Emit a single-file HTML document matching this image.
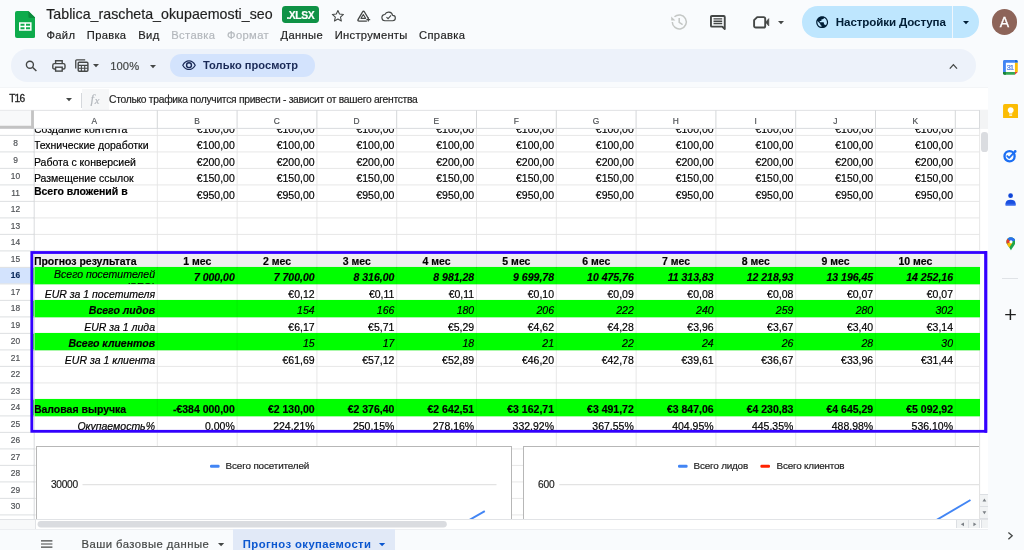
<!DOCTYPE html><html><head><meta charset="utf-8"><title>Tablica_rascheta_okupaemosti_seo</title>
<style>
html,body{margin:0;padding:0}
body{width:1024px;height:550px;overflow:hidden;position:relative;background:#f9fbfd;font-family:"Liberation Sans",sans-serif;}
div,svg{position:absolute;box-sizing:border-box}
#root{-webkit-text-stroke:0.18px}
.clip{overflow:hidden}
</style></head><body><div id="root" style="left:0;top:0;width:1024px;height:550px;will-change:transform">
<svg style="left:14.8px;top:11px" width="20.4" height="27" viewBox="0 0 20.4 27">
<path d="M2 0 H13.4 L20.4 7 V25 a2 2 0 0 1 -2 2 H2 a2 2 0 0 1 -2 -2 V2 a2 2 0 0 1 2 -2z" fill="#0eab4c"/>
<path d="M13.4 0 L20.4 7 H15 a1.6 1.6 0 0 1 -1.6 -1.6z" fill="#0b8a3c"/>
<path d="M4 11.3 H16.6 V19.7 H4z M5.5 12.8 V14.8 H9.5 V12.8z M11 12.8 V14.8 H15.1 V12.8z M5.5 16.2 V18.2 H9.5 V16.2z M11 16.2 V18.2 H15.1 V16.2z" fill="#fff" fill-rule="evenodd"/>
</svg>
<div style="top:6.48px;height:16px;line-height:16px;font-size:14.2px;color:#1f1f1f;white-space:pre;letter-spacing:0.029px;left:46.20px;">Tablica_rascheta_okupaemosti_seo</div>
<div style="left:282.00px;top:6.40px;width:37.20px;height:16.20px;background:#0f9246;border-radius:3.4px;"></div>
<div style="top:7.70px;height:16px;line-height:16px;font-size:10.4px;color:#fff;white-space:pre;font-weight:700;letter-spacing:-0.446px;left:286.40px;">.XLSX</div>
<div style="top:26.82px;height:16px;line-height:16px;font-size:11.2px;color:#1f1f1f;white-space:pre;letter-spacing:0.271px;left:46.60px;">Файл</div>
<div style="top:26.82px;height:16px;line-height:16px;font-size:11.2px;color:#1f1f1f;white-space:pre;letter-spacing:0.301px;left:86.80px;">Правка</div>
<div style="top:26.82px;height:16px;line-height:16px;font-size:11.2px;color:#1f1f1f;white-space:pre;letter-spacing:0.350px;left:138.30px;">Вид</div>
<div style="top:26.82px;height:16px;line-height:16px;font-size:11.2px;color:#b3b7bc;white-space:pre;letter-spacing:0.358px;left:171.30px;">Вставка</div>
<div style="top:26.82px;height:16px;line-height:16px;font-size:11.2px;color:#b3b7bc;white-space:pre;letter-spacing:0.375px;left:227.00px;">Формат</div>
<div style="top:26.82px;height:16px;line-height:16px;font-size:11.2px;color:#1f1f1f;white-space:pre;letter-spacing:0.330px;left:280.60px;">Данные</div>
<div style="top:26.82px;height:16px;line-height:16px;font-size:11.2px;color:#1f1f1f;white-space:pre;letter-spacing:0.276px;left:334.80px;">Инструменты</div>
<div style="top:26.82px;height:16px;line-height:16px;font-size:11.2px;color:#1f1f1f;white-space:pre;letter-spacing:0.358px;left:419.00px;">Справка</div>
<div style="left:10.50px;top:49.30px;width:965.50px;height:32.60px;background:#edf2fa;border-radius:16.3px;"></div>
<div style="top:58.22px;height:16px;line-height:16px;font-size:11.2px;color:#444746;white-space:pre;letter-spacing:0.094px;left:110.20px;">100%</div>
<div style="left:169.90px;top:54.30px;width:145.10px;height:22.70px;background:#d3e3fd;border-radius:11.35px;"></div>
<div style="top:57.35px;height:16px;line-height:16px;font-size:11.1px;color:#1a2a57;white-space:pre;font-weight:700;letter-spacing:0.016px;left:203.00px;-webkit-text-stroke:0;">Только просмотр</div>
<div style="left:0.00px;top:87.30px;width:988.00px;height:1.20px;background:#f3f5f7;"></div>
<div style="left:0.00px;top:88.20px;width:988.00px;height:22.20px;background:#fff;"></div>
<div style="top:91.37px;height:16px;line-height:16px;font-size:10.2px;color:#1f1f1f;white-space:pre;letter-spacing:-0.788px;left:9.20px;-webkit-text-stroke:0.3px;">T16</div>
<div style="left:81.30px;top:92.50px;width:1.00px;height:15.00px;background:#d5d8dc;"></div>
<div style="left:81.90px;top:89.40px;width:26.90px;height:20.60px;background:#f6f7f8;"></div>
<div style="top:91.53px;height:16px;line-height:16px;font-size:10.3px;color:#1f1f1f;white-space:pre;letter-spacing:-0.287px;left:109.00px;">Столько трафика получится привести - зависит от вашего агентства</div>
<div style="left:0.00px;top:110.40px;width:988.00px;height:418.60px;background:#fff;"></div>
<svg style="left:0;top:0" width="1024" height="550"><g stroke="#e3e3e3" stroke-width="0.85"><line x1="0" y1="135.40" x2="979.60" y2="135.40"/><line x1="0" y1="151.90" x2="979.60" y2="151.90"/><line x1="0" y1="168.40" x2="979.60" y2="168.40"/><line x1="0" y1="184.90" x2="979.60" y2="184.90"/><line x1="0" y1="201.40" x2="979.60" y2="201.40"/><line x1="0" y1="217.90" x2="979.60" y2="217.90"/><line x1="0" y1="234.40" x2="979.60" y2="234.40"/><line x1="0" y1="250.90" x2="979.60" y2="250.90"/><line x1="0" y1="267.40" x2="979.60" y2="267.40"/><line x1="0" y1="283.90" x2="979.60" y2="283.90"/><line x1="0" y1="300.40" x2="979.60" y2="300.40"/><line x1="0" y1="316.90" x2="979.60" y2="316.90"/><line x1="0" y1="333.40" x2="979.60" y2="333.40"/><line x1="0" y1="349.90" x2="979.60" y2="349.90"/><line x1="0" y1="366.40" x2="979.60" y2="366.40"/><line x1="0" y1="382.90" x2="979.60" y2="382.90"/><line x1="0" y1="399.40" x2="979.60" y2="399.40"/><line x1="0" y1="415.90" x2="979.60" y2="415.90"/><line x1="0" y1="432.40" x2="979.60" y2="432.40"/><line x1="0" y1="448.90" x2="979.60" y2="448.90"/><line x1="0" y1="465.40" x2="979.60" y2="465.40"/><line x1="0" y1="481.90" x2="979.60" y2="481.90"/><line x1="0" y1="498.40" x2="979.60" y2="498.40"/><line x1="0" y1="514.90" x2="979.60" y2="514.90"/><line x1="157.30" y1="110.40" x2="157.30" y2="519.50"/><line x1="237.10" y1="110.40" x2="237.10" y2="519.50"/><line x1="316.90" y1="110.40" x2="316.90" y2="519.50"/><line x1="396.70" y1="110.40" x2="396.70" y2="519.50"/><line x1="476.50" y1="110.40" x2="476.50" y2="519.50"/><line x1="556.30" y1="110.40" x2="556.30" y2="519.50"/><line x1="636.10" y1="110.40" x2="636.10" y2="519.50"/><line x1="715.90" y1="110.40" x2="715.90" y2="519.50"/><line x1="795.70" y1="110.40" x2="795.70" y2="519.50"/><line x1="875.50" y1="110.40" x2="875.50" y2="519.50"/><line x1="955.30" y1="110.40" x2="955.30" y2="519.50"/><line x1="979.60" y1="110.40" x2="979.60" y2="519.50"/></g></svg>
<svg style="left:0;top:0" width="1024" height="550"><rect x="33.0" y="250.45" width="947.00" height="17.35" fill="#efefef"/><rect x="33.0" y="266.95" width="947.00" height="17.35" fill="#00ff00"/><rect x="33.0" y="299.95" width="947.00" height="17.35" fill="#00ff00"/><rect x="33.0" y="332.95" width="947.00" height="17.35" fill="#00ff00"/><rect x="33.0" y="398.95" width="947.00" height="17.35" fill="#00ff00"/><line x1="157.30" y1="250.45" x2="157.30" y2="267.80" stroke="#000" stroke-opacity="0.09" stroke-width="0.85"/><line x1="237.10" y1="250.45" x2="237.10" y2="267.80" stroke="#000" stroke-opacity="0.09" stroke-width="0.85"/><line x1="316.90" y1="250.45" x2="316.90" y2="267.80" stroke="#000" stroke-opacity="0.09" stroke-width="0.85"/><line x1="396.70" y1="250.45" x2="396.70" y2="267.80" stroke="#000" stroke-opacity="0.09" stroke-width="0.85"/><line x1="476.50" y1="250.45" x2="476.50" y2="267.80" stroke="#000" stroke-opacity="0.09" stroke-width="0.85"/><line x1="556.30" y1="250.45" x2="556.30" y2="267.80" stroke="#000" stroke-opacity="0.09" stroke-width="0.85"/><line x1="636.10" y1="250.45" x2="636.10" y2="267.80" stroke="#000" stroke-opacity="0.09" stroke-width="0.85"/><line x1="715.90" y1="250.45" x2="715.90" y2="267.80" stroke="#000" stroke-opacity="0.09" stroke-width="0.85"/><line x1="795.70" y1="250.45" x2="795.70" y2="267.80" stroke="#000" stroke-opacity="0.09" stroke-width="0.85"/><line x1="875.50" y1="250.45" x2="875.50" y2="267.80" stroke="#000" stroke-opacity="0.09" stroke-width="0.85"/><line x1="955.30" y1="250.45" x2="955.30" y2="267.80" stroke="#000" stroke-opacity="0.09" stroke-width="0.85"/><line x1="157.30" y1="266.95" x2="157.30" y2="284.30" stroke="#000" stroke-opacity="0.07" stroke-width="0.85"/><line x1="237.10" y1="266.95" x2="237.10" y2="284.30" stroke="#000" stroke-opacity="0.07" stroke-width="0.85"/><line x1="316.90" y1="266.95" x2="316.90" y2="284.30" stroke="#000" stroke-opacity="0.07" stroke-width="0.85"/><line x1="396.70" y1="266.95" x2="396.70" y2="284.30" stroke="#000" stroke-opacity="0.07" stroke-width="0.85"/><line x1="476.50" y1="266.95" x2="476.50" y2="284.30" stroke="#000" stroke-opacity="0.07" stroke-width="0.85"/><line x1="556.30" y1="266.95" x2="556.30" y2="284.30" stroke="#000" stroke-opacity="0.07" stroke-width="0.85"/><line x1="636.10" y1="266.95" x2="636.10" y2="284.30" stroke="#000" stroke-opacity="0.07" stroke-width="0.85"/><line x1="715.90" y1="266.95" x2="715.90" y2="284.30" stroke="#000" stroke-opacity="0.07" stroke-width="0.85"/><line x1="795.70" y1="266.95" x2="795.70" y2="284.30" stroke="#000" stroke-opacity="0.07" stroke-width="0.85"/><line x1="875.50" y1="266.95" x2="875.50" y2="284.30" stroke="#000" stroke-opacity="0.07" stroke-width="0.85"/><line x1="955.30" y1="266.95" x2="955.30" y2="284.30" stroke="#000" stroke-opacity="0.07" stroke-width="0.85"/><line x1="157.30" y1="299.95" x2="157.30" y2="317.30" stroke="#000" stroke-opacity="0.07" stroke-width="0.85"/><line x1="237.10" y1="299.95" x2="237.10" y2="317.30" stroke="#000" stroke-opacity="0.07" stroke-width="0.85"/><line x1="316.90" y1="299.95" x2="316.90" y2="317.30" stroke="#000" stroke-opacity="0.07" stroke-width="0.85"/><line x1="396.70" y1="299.95" x2="396.70" y2="317.30" stroke="#000" stroke-opacity="0.07" stroke-width="0.85"/><line x1="476.50" y1="299.95" x2="476.50" y2="317.30" stroke="#000" stroke-opacity="0.07" stroke-width="0.85"/><line x1="556.30" y1="299.95" x2="556.30" y2="317.30" stroke="#000" stroke-opacity="0.07" stroke-width="0.85"/><line x1="636.10" y1="299.95" x2="636.10" y2="317.30" stroke="#000" stroke-opacity="0.07" stroke-width="0.85"/><line x1="715.90" y1="299.95" x2="715.90" y2="317.30" stroke="#000" stroke-opacity="0.07" stroke-width="0.85"/><line x1="795.70" y1="299.95" x2="795.70" y2="317.30" stroke="#000" stroke-opacity="0.07" stroke-width="0.85"/><line x1="875.50" y1="299.95" x2="875.50" y2="317.30" stroke="#000" stroke-opacity="0.07" stroke-width="0.85"/><line x1="955.30" y1="299.95" x2="955.30" y2="317.30" stroke="#000" stroke-opacity="0.07" stroke-width="0.85"/><line x1="157.30" y1="332.95" x2="157.30" y2="350.30" stroke="#000" stroke-opacity="0.07" stroke-width="0.85"/><line x1="237.10" y1="332.95" x2="237.10" y2="350.30" stroke="#000" stroke-opacity="0.07" stroke-width="0.85"/><line x1="316.90" y1="332.95" x2="316.90" y2="350.30" stroke="#000" stroke-opacity="0.07" stroke-width="0.85"/><line x1="396.70" y1="332.95" x2="396.70" y2="350.30" stroke="#000" stroke-opacity="0.07" stroke-width="0.85"/><line x1="476.50" y1="332.95" x2="476.50" y2="350.30" stroke="#000" stroke-opacity="0.07" stroke-width="0.85"/><line x1="556.30" y1="332.95" x2="556.30" y2="350.30" stroke="#000" stroke-opacity="0.07" stroke-width="0.85"/><line x1="636.10" y1="332.95" x2="636.10" y2="350.30" stroke="#000" stroke-opacity="0.07" stroke-width="0.85"/><line x1="715.90" y1="332.95" x2="715.90" y2="350.30" stroke="#000" stroke-opacity="0.07" stroke-width="0.85"/><line x1="795.70" y1="332.95" x2="795.70" y2="350.30" stroke="#000" stroke-opacity="0.07" stroke-width="0.85"/><line x1="875.50" y1="332.95" x2="875.50" y2="350.30" stroke="#000" stroke-opacity="0.07" stroke-width="0.85"/><line x1="955.30" y1="332.95" x2="955.30" y2="350.30" stroke="#000" stroke-opacity="0.07" stroke-width="0.85"/><line x1="157.30" y1="398.95" x2="157.30" y2="416.30" stroke="#000" stroke-opacity="0.07" stroke-width="0.85"/><line x1="237.10" y1="398.95" x2="237.10" y2="416.30" stroke="#000" stroke-opacity="0.07" stroke-width="0.85"/><line x1="316.90" y1="398.95" x2="316.90" y2="416.30" stroke="#000" stroke-opacity="0.07" stroke-width="0.85"/><line x1="396.70" y1="398.95" x2="396.70" y2="416.30" stroke="#000" stroke-opacity="0.07" stroke-width="0.85"/><line x1="476.50" y1="398.95" x2="476.50" y2="416.30" stroke="#000" stroke-opacity="0.07" stroke-width="0.85"/><line x1="556.30" y1="398.95" x2="556.30" y2="416.30" stroke="#000" stroke-opacity="0.07" stroke-width="0.85"/><line x1="636.10" y1="398.95" x2="636.10" y2="416.30" stroke="#000" stroke-opacity="0.07" stroke-width="0.85"/><line x1="715.90" y1="398.95" x2="715.90" y2="416.30" stroke="#000" stroke-opacity="0.07" stroke-width="0.85"/><line x1="795.70" y1="398.95" x2="795.70" y2="416.30" stroke="#000" stroke-opacity="0.07" stroke-width="0.85"/><line x1="875.50" y1="398.95" x2="875.50" y2="416.30" stroke="#000" stroke-opacity="0.07" stroke-width="0.85"/><line x1="955.30" y1="398.95" x2="955.30" y2="416.30" stroke="#000" stroke-opacity="0.07" stroke-width="0.85"/></svg>
<div class="clip" style="left:0;top:128.6px;width:979.6px;height:390.9px">
<div style="left:0;top:-128.6px;width:1024px;height:550px">
<div style="top:120.66px;height:16px;line-height:16px;font-size:10.5px;color:#000;white-space:pre;left:33.90px;">Создание контента</div>
<div style="top:137.16px;height:16px;line-height:16px;font-size:10.5px;color:#000;white-space:pre;left:33.90px;">Технические доработки</div>
<div style="top:153.66px;height:16px;line-height:16px;font-size:10.5px;color:#000;white-space:pre;left:33.90px;">Работа с конверсией</div>
<div style="top:170.16px;height:16px;line-height:16px;font-size:10.5px;color:#000;white-space:pre;left:33.90px;">Размещение ссылок</div>
<div style="top:183.26px;height:16px;line-height:16px;font-size:10.5px;color:#000;white-space:pre;font-weight:700;left:33.90px;">Всего вложений в</div>
<div style="top:252.56px;height:16px;line-height:16px;font-size:10.5px;color:#000;white-space:pre;font-weight:700;left:33.90px;">Прогноз результата</div>
<div style="top:265.56px;height:16px;line-height:16px;font-size:10.5px;color:#000;white-space:pre;font-style:italic;left:54.06px;">Всего посетителей</div>
<div style="top:285.66px;height:16px;line-height:16px;font-size:10.5px;color:#000;white-space:pre;font-style:italic;left:44.69px;">EUR за 1 посетителя</div>
<div style="top:302.16px;height:16px;line-height:16px;font-size:10.5px;color:#000;white-space:pre;font-weight:700;font-style:italic;left:88.86px;">Всего лидов</div>
<div style="top:318.66px;height:16px;line-height:16px;font-size:10.5px;color:#000;white-space:pre;font-style:italic;left:84.22px;">EUR за 1 лида</div>
<div style="top:335.16px;height:16px;line-height:16px;font-size:10.5px;color:#000;white-space:pre;font-weight:700;font-style:italic;left:68.39px;">Всего клиентов</div>
<div style="top:351.66px;height:16px;line-height:16px;font-size:10.5px;color:#000;white-space:pre;font-style:italic;left:64.83px;">EUR за 1 клиента</div>
<div style="top:401.16px;height:16px;line-height:16px;font-size:10.5px;color:#000;white-space:pre;font-weight:700;left:33.90px;">Валовая выручка</div>
<div style="top:417.66px;height:16px;line-height:16px;font-size:10.5px;color:#000;white-space:pre;font-style:italic;left:77.39px;">Окупаемость%</div>
<div class="clip" style="left:0;top:267.40px;width:157.30px;height:16.60px">
<div style="top:11.36px;height:16px;line-height:16px;font-size:10.5px;color:#000;white-space:pre;font-style:italic;left:125.83px;">(SEO)</div>
</div>
<div style="top:120.66px;height:16px;line-height:16px;font-size:10.5px;color:#000;white-space:pre;left:196.83px;">€100,00</div>
<div style="top:120.66px;height:16px;line-height:16px;font-size:10.5px;color:#000;white-space:pre;left:276.63px;">€100,00</div>
<div style="top:120.66px;height:16px;line-height:16px;font-size:10.5px;color:#000;white-space:pre;left:356.43px;">€100,00</div>
<div style="top:120.66px;height:16px;line-height:16px;font-size:10.5px;color:#000;white-space:pre;left:436.23px;">€100,00</div>
<div style="top:120.66px;height:16px;line-height:16px;font-size:10.5px;color:#000;white-space:pre;left:516.03px;">€100,00</div>
<div style="top:120.66px;height:16px;line-height:16px;font-size:10.5px;color:#000;white-space:pre;left:595.83px;">€100,00</div>
<div style="top:120.66px;height:16px;line-height:16px;font-size:10.5px;color:#000;white-space:pre;left:675.63px;">€100,00</div>
<div style="top:120.66px;height:16px;line-height:16px;font-size:10.5px;color:#000;white-space:pre;left:755.43px;">€100,00</div>
<div style="top:120.66px;height:16px;line-height:16px;font-size:10.5px;color:#000;white-space:pre;left:835.23px;">€100,00</div>
<div style="top:120.66px;height:16px;line-height:16px;font-size:10.5px;color:#000;white-space:pre;left:915.03px;">€100,00</div>
<div style="top:137.16px;height:16px;line-height:16px;font-size:10.5px;color:#000;white-space:pre;left:196.83px;">€100,00</div>
<div style="top:137.16px;height:16px;line-height:16px;font-size:10.5px;color:#000;white-space:pre;left:276.63px;">€100,00</div>
<div style="top:137.16px;height:16px;line-height:16px;font-size:10.5px;color:#000;white-space:pre;left:356.43px;">€100,00</div>
<div style="top:137.16px;height:16px;line-height:16px;font-size:10.5px;color:#000;white-space:pre;left:436.23px;">€100,00</div>
<div style="top:137.16px;height:16px;line-height:16px;font-size:10.5px;color:#000;white-space:pre;left:516.03px;">€100,00</div>
<div style="top:137.16px;height:16px;line-height:16px;font-size:10.5px;color:#000;white-space:pre;left:595.83px;">€100,00</div>
<div style="top:137.16px;height:16px;line-height:16px;font-size:10.5px;color:#000;white-space:pre;left:675.63px;">€100,00</div>
<div style="top:137.16px;height:16px;line-height:16px;font-size:10.5px;color:#000;white-space:pre;left:755.43px;">€100,00</div>
<div style="top:137.16px;height:16px;line-height:16px;font-size:10.5px;color:#000;white-space:pre;left:835.23px;">€100,00</div>
<div style="top:137.16px;height:16px;line-height:16px;font-size:10.5px;color:#000;white-space:pre;left:915.03px;">€100,00</div>
<div style="top:153.66px;height:16px;line-height:16px;font-size:10.5px;color:#000;white-space:pre;left:196.83px;">€200,00</div>
<div style="top:153.66px;height:16px;line-height:16px;font-size:10.5px;color:#000;white-space:pre;left:276.63px;">€200,00</div>
<div style="top:153.66px;height:16px;line-height:16px;font-size:10.5px;color:#000;white-space:pre;left:356.43px;">€200,00</div>
<div style="top:153.66px;height:16px;line-height:16px;font-size:10.5px;color:#000;white-space:pre;left:436.23px;">€200,00</div>
<div style="top:153.66px;height:16px;line-height:16px;font-size:10.5px;color:#000;white-space:pre;left:516.03px;">€200,00</div>
<div style="top:153.66px;height:16px;line-height:16px;font-size:10.5px;color:#000;white-space:pre;left:595.83px;">€200,00</div>
<div style="top:153.66px;height:16px;line-height:16px;font-size:10.5px;color:#000;white-space:pre;left:675.63px;">€200,00</div>
<div style="top:153.66px;height:16px;line-height:16px;font-size:10.5px;color:#000;white-space:pre;left:755.43px;">€200,00</div>
<div style="top:153.66px;height:16px;line-height:16px;font-size:10.5px;color:#000;white-space:pre;left:835.23px;">€200,00</div>
<div style="top:153.66px;height:16px;line-height:16px;font-size:10.5px;color:#000;white-space:pre;left:915.03px;">€200,00</div>
<div style="top:170.16px;height:16px;line-height:16px;font-size:10.5px;color:#000;white-space:pre;left:196.83px;">€150,00</div>
<div style="top:170.16px;height:16px;line-height:16px;font-size:10.5px;color:#000;white-space:pre;left:276.63px;">€150,00</div>
<div style="top:170.16px;height:16px;line-height:16px;font-size:10.5px;color:#000;white-space:pre;left:356.43px;">€150,00</div>
<div style="top:170.16px;height:16px;line-height:16px;font-size:10.5px;color:#000;white-space:pre;left:436.23px;">€150,00</div>
<div style="top:170.16px;height:16px;line-height:16px;font-size:10.5px;color:#000;white-space:pre;left:516.03px;">€150,00</div>
<div style="top:170.16px;height:16px;line-height:16px;font-size:10.5px;color:#000;white-space:pre;left:595.83px;">€150,00</div>
<div style="top:170.16px;height:16px;line-height:16px;font-size:10.5px;color:#000;white-space:pre;left:675.63px;">€150,00</div>
<div style="top:170.16px;height:16px;line-height:16px;font-size:10.5px;color:#000;white-space:pre;left:755.43px;">€150,00</div>
<div style="top:170.16px;height:16px;line-height:16px;font-size:10.5px;color:#000;white-space:pre;left:835.23px;">€150,00</div>
<div style="top:170.16px;height:16px;line-height:16px;font-size:10.5px;color:#000;white-space:pre;left:915.03px;">€150,00</div>
<div style="top:186.66px;height:16px;line-height:16px;font-size:10.5px;color:#000;white-space:pre;left:196.83px;">€950,00</div>
<div style="top:186.66px;height:16px;line-height:16px;font-size:10.5px;color:#000;white-space:pre;left:276.63px;">€950,00</div>
<div style="top:186.66px;height:16px;line-height:16px;font-size:10.5px;color:#000;white-space:pre;left:356.43px;">€950,00</div>
<div style="top:186.66px;height:16px;line-height:16px;font-size:10.5px;color:#000;white-space:pre;left:436.23px;">€950,00</div>
<div style="top:186.66px;height:16px;line-height:16px;font-size:10.5px;color:#000;white-space:pre;left:516.03px;">€950,00</div>
<div style="top:186.66px;height:16px;line-height:16px;font-size:10.5px;color:#000;white-space:pre;left:595.83px;">€950,00</div>
<div style="top:186.66px;height:16px;line-height:16px;font-size:10.5px;color:#000;white-space:pre;left:675.63px;">€950,00</div>
<div style="top:186.66px;height:16px;line-height:16px;font-size:10.5px;color:#000;white-space:pre;left:755.43px;">€950,00</div>
<div style="top:186.66px;height:16px;line-height:16px;font-size:10.5px;color:#000;white-space:pre;left:835.23px;">€950,00</div>
<div style="top:186.66px;height:16px;line-height:16px;font-size:10.5px;color:#000;white-space:pre;left:915.03px;">€950,00</div>
<div style="top:252.66px;height:16px;line-height:16px;font-size:10.5px;color:#000;white-space:pre;font-weight:700;left:183.16px;">1 мес</div>
<div style="top:252.66px;height:16px;line-height:16px;font-size:10.5px;color:#000;white-space:pre;font-weight:700;left:262.96px;">2 мес</div>
<div style="top:252.66px;height:16px;line-height:16px;font-size:10.5px;color:#000;white-space:pre;font-weight:700;left:342.76px;">3 мес</div>
<div style="top:252.66px;height:16px;line-height:16px;font-size:10.5px;color:#000;white-space:pre;font-weight:700;left:422.56px;">4 мес</div>
<div style="top:252.66px;height:16px;line-height:16px;font-size:10.5px;color:#000;white-space:pre;font-weight:700;left:502.36px;">5 мес</div>
<div style="top:252.66px;height:16px;line-height:16px;font-size:10.5px;color:#000;white-space:pre;font-weight:700;left:582.16px;">6 мес</div>
<div style="top:252.66px;height:16px;line-height:16px;font-size:10.5px;color:#000;white-space:pre;font-weight:700;left:661.96px;">7 мес</div>
<div style="top:252.66px;height:16px;line-height:16px;font-size:10.5px;color:#000;white-space:pre;font-weight:700;left:741.76px;">8 мес</div>
<div style="top:252.66px;height:16px;line-height:16px;font-size:10.5px;color:#000;white-space:pre;font-weight:700;left:821.56px;">9 мес</div>
<div style="top:252.66px;height:16px;line-height:16px;font-size:10.5px;color:#000;white-space:pre;font-weight:700;left:898.45px;">10 мес</div>
<div style="top:269.16px;height:16px;line-height:16px;font-size:10.5px;color:#000;white-space:pre;font-weight:700;font-style:italic;left:193.93px;">7 000,00</div>
<div style="top:401.16px;height:16px;line-height:16px;font-size:10.5px;color:#000;white-space:pre;font-weight:700;left:172.91px;">-€384 000,00</div>
<div style="top:417.66px;height:16px;line-height:16px;font-size:10.5px;color:#000;white-space:pre;left:205.02px;">0,00%</div>
<div style="top:269.16px;height:16px;line-height:16px;font-size:10.5px;color:#000;white-space:pre;font-weight:700;font-style:italic;left:273.72px;">7 700,00</div>
<div style="top:285.66px;height:16px;line-height:16px;font-size:10.5px;color:#000;white-space:pre;left:288.32px;">€0,12</div>
<div style="top:302.16px;height:16px;line-height:16px;font-size:10.5px;color:#000;white-space:pre;font-style:italic;left:297.07px;">154</div>
<div style="top:318.66px;height:16px;line-height:16px;font-size:10.5px;color:#000;white-space:pre;left:288.32px;">€6,17</div>
<div style="top:335.16px;height:16px;line-height:16px;font-size:10.5px;color:#000;white-space:pre;font-style:italic;left:302.91px;">15</div>
<div style="top:351.66px;height:16px;line-height:16px;font-size:10.5px;color:#000;white-space:pre;left:282.47px;">€61,69</div>
<div style="top:401.16px;height:16px;line-height:16px;font-size:10.5px;color:#000;white-space:pre;font-weight:700;left:267.88px;">€2 130,00</div>
<div style="top:417.66px;height:16px;line-height:16px;font-size:10.5px;color:#000;white-space:pre;left:273.15px;">224,21%</div>
<div style="top:269.16px;height:16px;line-height:16px;font-size:10.5px;color:#000;white-space:pre;font-weight:700;font-style:italic;left:353.52px;">8 316,00</div>
<div style="top:285.66px;height:16px;line-height:16px;font-size:10.5px;color:#000;white-space:pre;left:368.90px;">€0,11</div>
<div style="top:302.16px;height:16px;line-height:16px;font-size:10.5px;color:#000;white-space:pre;font-style:italic;left:376.87px;">166</div>
<div style="top:318.66px;height:16px;line-height:16px;font-size:10.5px;color:#000;white-space:pre;left:368.12px;">€5,71</div>
<div style="top:335.16px;height:16px;line-height:16px;font-size:10.5px;color:#000;white-space:pre;font-style:italic;left:382.71px;">17</div>
<div style="top:351.66px;height:16px;line-height:16px;font-size:10.5px;color:#000;white-space:pre;left:362.27px;">€57,12</div>
<div style="top:401.16px;height:16px;line-height:16px;font-size:10.5px;color:#000;white-space:pre;font-weight:700;left:347.68px;">€2 376,40</div>
<div style="top:417.66px;height:16px;line-height:16px;font-size:10.5px;color:#000;white-space:pre;left:352.95px;">250,15%</div>
<div style="top:269.16px;height:16px;line-height:16px;font-size:10.5px;color:#000;white-space:pre;font-weight:700;font-style:italic;left:433.32px;">8 981,28</div>
<div style="top:285.66px;height:16px;line-height:16px;font-size:10.5px;color:#000;white-space:pre;left:448.70px;">€0,11</div>
<div style="top:302.16px;height:16px;line-height:16px;font-size:10.5px;color:#000;white-space:pre;font-style:italic;left:456.67px;">180</div>
<div style="top:318.66px;height:16px;line-height:16px;font-size:10.5px;color:#000;white-space:pre;left:447.92px;">€5,29</div>
<div style="top:335.16px;height:16px;line-height:16px;font-size:10.5px;color:#000;white-space:pre;font-style:italic;left:462.51px;">18</div>
<div style="top:351.66px;height:16px;line-height:16px;font-size:10.5px;color:#000;white-space:pre;left:442.07px;">€52,89</div>
<div style="top:401.16px;height:16px;line-height:16px;font-size:10.5px;color:#000;white-space:pre;font-weight:700;left:427.48px;">€2 642,51</div>
<div style="top:417.66px;height:16px;line-height:16px;font-size:10.5px;color:#000;white-space:pre;left:432.75px;">278,16%</div>
<div style="top:269.16px;height:16px;line-height:16px;font-size:10.5px;color:#000;white-space:pre;font-weight:700;font-style:italic;left:513.12px;">9 699,78</div>
<div style="top:285.66px;height:16px;line-height:16px;font-size:10.5px;color:#000;white-space:pre;left:527.72px;">€0,10</div>
<div style="top:302.16px;height:16px;line-height:16px;font-size:10.5px;color:#000;white-space:pre;font-style:italic;left:536.47px;">206</div>
<div style="top:318.66px;height:16px;line-height:16px;font-size:10.5px;color:#000;white-space:pre;left:527.72px;">€4,62</div>
<div style="top:335.16px;height:16px;line-height:16px;font-size:10.5px;color:#000;white-space:pre;font-style:italic;left:542.31px;">21</div>
<div style="top:351.66px;height:16px;line-height:16px;font-size:10.5px;color:#000;white-space:pre;left:521.88px;">€46,20</div>
<div style="top:401.16px;height:16px;line-height:16px;font-size:10.5px;color:#000;white-space:pre;font-weight:700;left:507.28px;">€3 162,71</div>
<div style="top:417.66px;height:16px;line-height:16px;font-size:10.5px;color:#000;white-space:pre;left:512.55px;">332,92%</div>
<div style="top:269.16px;height:16px;line-height:16px;font-size:10.5px;color:#000;white-space:pre;font-weight:700;font-style:italic;left:587.08px;">10 475,76</div>
<div style="top:285.66px;height:16px;line-height:16px;font-size:10.5px;color:#000;white-space:pre;left:607.52px;">€0,09</div>
<div style="top:302.16px;height:16px;line-height:16px;font-size:10.5px;color:#000;white-space:pre;font-style:italic;left:616.27px;">222</div>
<div style="top:318.66px;height:16px;line-height:16px;font-size:10.5px;color:#000;white-space:pre;left:607.52px;">€4,28</div>
<div style="top:335.16px;height:16px;line-height:16px;font-size:10.5px;color:#000;white-space:pre;font-style:italic;left:622.11px;">22</div>
<div style="top:351.66px;height:16px;line-height:16px;font-size:10.5px;color:#000;white-space:pre;left:601.67px;">€42,78</div>
<div style="top:401.16px;height:16px;line-height:16px;font-size:10.5px;color:#000;white-space:pre;font-weight:700;left:587.08px;">€3 491,72</div>
<div style="top:417.66px;height:16px;line-height:16px;font-size:10.5px;color:#000;white-space:pre;left:592.35px;">367,55%</div>
<div style="top:269.16px;height:16px;line-height:16px;font-size:10.5px;color:#000;white-space:pre;font-weight:700;font-style:italic;left:667.66px;">11 313,83</div>
<div style="top:285.66px;height:16px;line-height:16px;font-size:10.5px;color:#000;white-space:pre;left:687.32px;">€0,08</div>
<div style="top:302.16px;height:16px;line-height:16px;font-size:10.5px;color:#000;white-space:pre;font-style:italic;left:696.07px;">240</div>
<div style="top:318.66px;height:16px;line-height:16px;font-size:10.5px;color:#000;white-space:pre;left:687.32px;">€3,96</div>
<div style="top:335.16px;height:16px;line-height:16px;font-size:10.5px;color:#000;white-space:pre;font-style:italic;left:701.91px;">24</div>
<div style="top:351.66px;height:16px;line-height:16px;font-size:10.5px;color:#000;white-space:pre;left:681.48px;">€39,61</div>
<div style="top:401.16px;height:16px;line-height:16px;font-size:10.5px;color:#000;white-space:pre;font-weight:700;left:666.88px;">€3 847,06</div>
<div style="top:417.66px;height:16px;line-height:16px;font-size:10.5px;color:#000;white-space:pre;left:672.15px;">404,95%</div>
<div style="top:269.16px;height:16px;line-height:16px;font-size:10.5px;color:#000;white-space:pre;font-weight:700;font-style:italic;left:746.68px;">12 218,93</div>
<div style="top:285.66px;height:16px;line-height:16px;font-size:10.5px;color:#000;white-space:pre;left:767.12px;">€0,08</div>
<div style="top:302.16px;height:16px;line-height:16px;font-size:10.5px;color:#000;white-space:pre;font-style:italic;left:775.87px;">259</div>
<div style="top:318.66px;height:16px;line-height:16px;font-size:10.5px;color:#000;white-space:pre;left:767.12px;">€3,67</div>
<div style="top:335.16px;height:16px;line-height:16px;font-size:10.5px;color:#000;white-space:pre;font-style:italic;left:781.71px;">26</div>
<div style="top:351.66px;height:16px;line-height:16px;font-size:10.5px;color:#000;white-space:pre;left:761.28px;">€36,67</div>
<div style="top:401.16px;height:16px;line-height:16px;font-size:10.5px;color:#000;white-space:pre;font-weight:700;left:746.68px;">€4 230,83</div>
<div style="top:417.66px;height:16px;line-height:16px;font-size:10.5px;color:#000;white-space:pre;left:751.95px;">445,35%</div>
<div style="top:269.16px;height:16px;line-height:16px;font-size:10.5px;color:#000;white-space:pre;font-weight:700;font-style:italic;left:826.48px;">13 196,45</div>
<div style="top:285.66px;height:16px;line-height:16px;font-size:10.5px;color:#000;white-space:pre;left:846.92px;">€0,07</div>
<div style="top:302.16px;height:16px;line-height:16px;font-size:10.5px;color:#000;white-space:pre;font-style:italic;left:855.67px;">280</div>
<div style="top:318.66px;height:16px;line-height:16px;font-size:10.5px;color:#000;white-space:pre;left:846.92px;">€3,40</div>
<div style="top:335.16px;height:16px;line-height:16px;font-size:10.5px;color:#000;white-space:pre;font-style:italic;left:861.51px;">28</div>
<div style="top:351.66px;height:16px;line-height:16px;font-size:10.5px;color:#000;white-space:pre;left:841.08px;">€33,96</div>
<div style="top:401.16px;height:16px;line-height:16px;font-size:10.5px;color:#000;white-space:pre;font-weight:700;left:826.48px;">€4 645,29</div>
<div style="top:417.66px;height:16px;line-height:16px;font-size:10.5px;color:#000;white-space:pre;left:831.75px;">488,98%</div>
<div style="top:269.16px;height:16px;line-height:16px;font-size:10.5px;color:#000;white-space:pre;font-weight:700;font-style:italic;left:906.28px;">14 252,16</div>
<div style="top:285.66px;height:16px;line-height:16px;font-size:10.5px;color:#000;white-space:pre;left:926.72px;">€0,07</div>
<div style="top:302.16px;height:16px;line-height:16px;font-size:10.5px;color:#000;white-space:pre;font-style:italic;left:935.47px;">302</div>
<div style="top:318.66px;height:16px;line-height:16px;font-size:10.5px;color:#000;white-space:pre;left:926.72px;">€3,14</div>
<div style="top:335.16px;height:16px;line-height:16px;font-size:10.5px;color:#000;white-space:pre;font-style:italic;left:941.31px;">30</div>
<div style="top:351.66px;height:16px;line-height:16px;font-size:10.5px;color:#000;white-space:pre;left:920.88px;">€31,44</div>
<div style="top:401.16px;height:16px;line-height:16px;font-size:10.5px;color:#000;white-space:pre;font-weight:700;left:906.28px;">€5 092,92</div>
<div style="top:417.66px;height:16px;line-height:16px;font-size:10.5px;color:#000;white-space:pre;left:911.55px;">536,10%</div>
</div></div>
<div style="left:0.00px;top:110.40px;width:988.00px;height:18.20px;background:#fff;"></div>
<svg style="left:0;top:0" width="1024" height="550"><line x1="0" y1="110.40" x2="988.0" y2="110.40" stroke="#dcdee1" stroke-width="0.9"/><line x1="0" y1="128.40" x2="979.6" y2="128.40" stroke="#d5d7da" stroke-width="0.9"/><line x1="157.30" y1="110.40" x2="157.30" y2="128.60" stroke="#d0d2d5" stroke-width="0.9"/><line x1="237.10" y1="110.40" x2="237.10" y2="128.60" stroke="#d0d2d5" stroke-width="0.9"/><line x1="316.90" y1="110.40" x2="316.90" y2="128.60" stroke="#d0d2d5" stroke-width="0.9"/><line x1="396.70" y1="110.40" x2="396.70" y2="128.60" stroke="#d0d2d5" stroke-width="0.9"/><line x1="476.50" y1="110.40" x2="476.50" y2="128.60" stroke="#d0d2d5" stroke-width="0.9"/><line x1="556.30" y1="110.40" x2="556.30" y2="128.60" stroke="#d0d2d5" stroke-width="0.9"/><line x1="636.10" y1="110.40" x2="636.10" y2="128.60" stroke="#d0d2d5" stroke-width="0.9"/><line x1="715.90" y1="110.40" x2="715.90" y2="128.60" stroke="#d0d2d5" stroke-width="0.9"/><line x1="795.70" y1="110.40" x2="795.70" y2="128.60" stroke="#d0d2d5" stroke-width="0.9"/><line x1="875.50" y1="110.40" x2="875.50" y2="128.60" stroke="#d0d2d5" stroke-width="0.9"/><line x1="955.30" y1="110.40" x2="955.30" y2="128.60" stroke="#d0d2d5" stroke-width="0.9"/><line x1="979.60" y1="110.40" x2="979.60" y2="128.60" stroke="#d0d2d5" stroke-width="0.9"/><rect x="0" y="110.70" width="31.1" height="15.2" fill="#f8f9fa"/><rect x="31.1" y="110.40" width="2.8" height="18.20" fill="#c3c3c3"/><rect x="0" y="125.75" width="33.9" height="2.85" fill="#c3c3c3"/></svg>
<div style="top:112.59px;height:16px;line-height:16px;font-size:8.4px;color:#4d5054;white-space:pre;left:91.40px;">A</div>
<div style="top:112.59px;height:16px;line-height:16px;font-size:8.4px;color:#4d5054;white-space:pre;left:194.20px;">B</div>
<div style="top:112.59px;height:16px;line-height:16px;font-size:8.4px;color:#4d5054;white-space:pre;left:273.77px;">C</div>
<div style="top:112.59px;height:16px;line-height:16px;font-size:8.4px;color:#4d5054;white-space:pre;left:353.57px;">D</div>
<div style="top:112.59px;height:16px;line-height:16px;font-size:8.4px;color:#4d5054;white-space:pre;left:433.60px;">E</div>
<div style="top:112.59px;height:16px;line-height:16px;font-size:8.4px;color:#4d5054;white-space:pre;left:513.64px;">F</div>
<div style="top:112.59px;height:16px;line-height:16px;font-size:8.4px;color:#4d5054;white-space:pre;left:592.74px;">G</div>
<div style="top:112.59px;height:16px;line-height:16px;font-size:8.4px;color:#4d5054;white-space:pre;left:672.77px;">H</div>
<div style="top:112.59px;height:16px;line-height:16px;font-size:8.4px;color:#4d5054;white-space:pre;left:754.44px;">I</div>
<div style="top:112.59px;height:16px;line-height:16px;font-size:8.4px;color:#4d5054;white-space:pre;left:833.31px;">J</div>
<div style="top:112.59px;height:16px;line-height:16px;font-size:8.4px;color:#4d5054;white-space:pre;left:912.40px;">K</div>
<div style="left:0.00px;top:129.00px;width:33.00px;height:390.50px;background:#fff;"></div>
<svg style="left:0;top:0" width="1024" height="550"><rect x="0" y="267.75" width="33.2" height="15.80" fill="#d3e3fd"/><line x1="34.20" y1="128.60" x2="34.20" y2="519.50" stroke="#d5d7da" stroke-width="0.9"/><line x1="0" y1="135.40" x2="34.20" y2="135.40" stroke="#d9dbde" stroke-width="0.9"/><line x1="0" y1="151.90" x2="34.20" y2="151.90" stroke="#d9dbde" stroke-width="0.9"/><line x1="0" y1="168.40" x2="34.20" y2="168.40" stroke="#d9dbde" stroke-width="0.9"/><line x1="0" y1="184.90" x2="34.20" y2="184.90" stroke="#d9dbde" stroke-width="0.9"/><line x1="0" y1="201.40" x2="34.20" y2="201.40" stroke="#d9dbde" stroke-width="0.9"/><line x1="0" y1="217.90" x2="34.20" y2="217.90" stroke="#d9dbde" stroke-width="0.9"/><line x1="0" y1="234.40" x2="34.20" y2="234.40" stroke="#d9dbde" stroke-width="0.9"/><line x1="0" y1="250.90" x2="34.20" y2="250.90" stroke="#d9dbde" stroke-width="0.9"/><line x1="0" y1="267.40" x2="34.20" y2="267.40" stroke="#d9dbde" stroke-width="0.9"/><line x1="0" y1="283.90" x2="34.20" y2="283.90" stroke="#d9dbde" stroke-width="0.9"/><line x1="0" y1="300.40" x2="34.20" y2="300.40" stroke="#d9dbde" stroke-width="0.9"/><line x1="0" y1="316.90" x2="34.20" y2="316.90" stroke="#d9dbde" stroke-width="0.9"/><line x1="0" y1="333.40" x2="34.20" y2="333.40" stroke="#d9dbde" stroke-width="0.9"/><line x1="0" y1="349.90" x2="34.20" y2="349.90" stroke="#d9dbde" stroke-width="0.9"/><line x1="0" y1="366.40" x2="34.20" y2="366.40" stroke="#d9dbde" stroke-width="0.9"/><line x1="0" y1="382.90" x2="34.20" y2="382.90" stroke="#d9dbde" stroke-width="0.9"/><line x1="0" y1="399.40" x2="34.20" y2="399.40" stroke="#d9dbde" stroke-width="0.9"/><line x1="0" y1="415.90" x2="34.20" y2="415.90" stroke="#d9dbde" stroke-width="0.9"/><line x1="0" y1="432.40" x2="34.20" y2="432.40" stroke="#d9dbde" stroke-width="0.9"/><line x1="0" y1="448.90" x2="34.20" y2="448.90" stroke="#d9dbde" stroke-width="0.9"/><line x1="0" y1="465.40" x2="34.20" y2="465.40" stroke="#d9dbde" stroke-width="0.9"/><line x1="0" y1="481.90" x2="34.20" y2="481.90" stroke="#d9dbde" stroke-width="0.9"/><line x1="0" y1="498.40" x2="34.20" y2="498.40" stroke="#d9dbde" stroke-width="0.9"/><line x1="0" y1="514.90" x2="34.20" y2="514.90" stroke="#d9dbde" stroke-width="0.9"/></svg>
<div style="top:135.19px;height:16px;line-height:16px;font-size:8.4px;color:#505357;white-space:pre;left:13.16px;">8</div>
<div style="top:151.69px;height:16px;line-height:16px;font-size:8.4px;color:#505357;white-space:pre;left:13.16px;">9</div>
<div style="top:168.19px;height:16px;line-height:16px;font-size:8.4px;color:#505357;white-space:pre;left:10.84px;">10</div>
<div style="top:184.69px;height:16px;line-height:16px;font-size:8.4px;color:#505357;white-space:pre;left:11.15px;">11</div>
<div style="top:201.19px;height:16px;line-height:16px;font-size:8.4px;color:#505357;white-space:pre;left:10.84px;">12</div>
<div style="top:217.69px;height:16px;line-height:16px;font-size:8.4px;color:#505357;white-space:pre;left:10.84px;">13</div>
<div style="top:234.19px;height:16px;line-height:16px;font-size:8.4px;color:#505357;white-space:pre;left:10.84px;">14</div>
<div style="top:250.69px;height:16px;line-height:16px;font-size:8.4px;color:#505357;white-space:pre;left:10.84px;">15</div>
<div style="top:267.19px;height:16px;line-height:16px;font-size:8.4px;color:#0b2a5c;white-space:pre;font-weight:700;left:10.84px;">16</div>
<div style="top:283.69px;height:16px;line-height:16px;font-size:8.4px;color:#505357;white-space:pre;left:10.84px;">17</div>
<div style="top:300.19px;height:16px;line-height:16px;font-size:8.4px;color:#505357;white-space:pre;left:10.84px;">18</div>
<div style="top:316.69px;height:16px;line-height:16px;font-size:8.4px;color:#505357;white-space:pre;left:10.84px;">19</div>
<div style="top:333.19px;height:16px;line-height:16px;font-size:8.4px;color:#505357;white-space:pre;left:10.84px;">20</div>
<div style="top:349.69px;height:16px;line-height:16px;font-size:8.4px;color:#505357;white-space:pre;left:10.84px;">21</div>
<div style="top:366.19px;height:16px;line-height:16px;font-size:8.4px;color:#505357;white-space:pre;left:10.84px;">22</div>
<div style="top:382.69px;height:16px;line-height:16px;font-size:8.4px;color:#505357;white-space:pre;left:10.84px;">23</div>
<div style="top:399.19px;height:16px;line-height:16px;font-size:8.4px;color:#505357;white-space:pre;left:10.84px;">24</div>
<div style="top:415.69px;height:16px;line-height:16px;font-size:8.4px;color:#505357;white-space:pre;left:10.84px;">25</div>
<div style="top:432.19px;height:16px;line-height:16px;font-size:8.4px;color:#505357;white-space:pre;left:10.84px;">26</div>
<div style="top:448.69px;height:16px;line-height:16px;font-size:8.4px;color:#505357;white-space:pre;left:10.84px;">27</div>
<div style="top:465.19px;height:16px;line-height:16px;font-size:8.4px;color:#505357;white-space:pre;left:10.84px;">28</div>
<div style="top:481.69px;height:16px;line-height:16px;font-size:8.4px;color:#505357;white-space:pre;left:10.84px;">29</div>
<div style="top:498.19px;height:16px;line-height:16px;font-size:8.4px;color:#505357;white-space:pre;left:10.84px;">30</div>
<svg style="left:0;top:0" width="1024" height="550"><rect x="31.80" y="252.50" width="954.00" height="178.80" fill="none" stroke="#3300ff" stroke-width="2.8"/></svg>
<div class="clip" style="left:0;top:128.6px;width:979.6px;height:390.9px"><div style="left:0;top:-128.6px;width:1024px;height:550px">
<div style="left:36.00px;top:445.70px;width:476.30px;height:120.00px;background:#fff;border:1px solid #b7b7b7;"></div>
<svg style="left:208px;top:460px" width="16" height="12"><rect x="2.0" y="4.85" width="9.6" height="2.8" rx="1.2" fill="#4285f4"/></svg>
<div style="top:458.47px;height:16px;line-height:16px;font-size:9.9px;color:#222;white-space:pre;letter-spacing:-0.139px;left:225.60px;">Всего посетителей</div>
<div style="top:476.77px;height:16px;line-height:16px;font-size:10.2px;color:#222;white-space:pre;letter-spacing:-0.309px;left:51.00px;">30000</div>
<svg style="left:0;top:480px" width="520" height="10"><line x1="82.5" y1="4.7" x2="496.5" y2="4.7" stroke="#e3e3e3" stroke-width="1.3"/></svg>
<svg style="left:460px;top:500px" width="40" height="30"><line x1="4" y1="23" x2="24.8" y2="11.2" stroke="#4285f4" stroke-width="1.9"/></svg>
<div style="left:523.00px;top:445.70px;width:480.00px;height:120.00px;background:#fff;border:1px solid #b7b7b7;"></div>
<svg style="left:676px;top:460px" width="16" height="12"><rect x="2.0" y="4.85" width="9.6" height="2.8" rx="1.2" fill="#4285f4"/></svg>
<div style="top:458.47px;height:16px;line-height:16px;font-size:9.9px;color:#222;white-space:pre;letter-spacing:-0.184px;left:693.60px;">Всего лидов</div>
<svg style="left:758px;top:460px" width="16" height="12"><rect x="2.4" y="4.85" width="9.6" height="2.8" rx="1.2" fill="#ff2200"/></svg>
<div style="top:458.47px;height:16px;line-height:16px;font-size:9.9px;color:#222;white-space:pre;letter-spacing:-0.190px;left:776.60px;">Всего клиентов</div>
<div style="top:476.77px;height:16px;line-height:16px;font-size:10.2px;color:#222;white-space:pre;letter-spacing:-0.133px;left:538.00px;">600</div>
<svg style="left:0;top:480px" width="1024" height="10"><line x1="559.3" y1="4.7" x2="980" y2="4.7" stroke="#e3e3e3" stroke-width="1.3"/></svg>
<svg style="left:920px;top:490px" width="60" height="40"><line x1="8" y1="35" x2="50.5" y2="10" stroke="#4285f4" stroke-width="1.9"/></svg>
</div></div>
<div style="left:980.00px;top:110.40px;width:8.00px;height:18.20px;background:#f3f4f5;"></div>
<div style="left:981.40px;top:132.00px;width:6.20px;height:19.80px;background:#dadce0;border-radius:3.1px;"></div>
<div style="left:979.90px;top:494.30px;width:8.10px;height:24.60px;background:#f1f3f4;"></div>
<div style="left:979.90px;top:494.00px;width:8.10px;height:0.90px;background:#dcdfe3;"></div>
<div style="left:979.90px;top:506.00px;width:8.10px;height:0.90px;background:#dcdfe3;"></div>
<div style="left:979.90px;top:518.40px;width:8.10px;height:0.90px;background:#dcdfe3;"></div>
<div style="left:979.10px;top:433.00px;width:1.00px;height:86.50px;background:#e3e3e3;"></div>
<svg style="left:980px;top:494px" width="8" height="26"><path d="M2.5 7.4 L4.4 4.6 L6.3 7.4z" fill="#7c8186"/><path d="M2.5 17.2 L4.4 20.2 L6.3 17.2z" fill="#7c8186"/></svg>
<div style="left:0.00px;top:519.50px;width:988.00px;height:9.50px;background:#fff;"></div>
<div style="left:0.00px;top:519.00px;width:988.00px;height:1.00px;background:#e1e3e6;"></div>
<div style="left:0.00px;top:519.50px;width:34.60px;height:9.50px;background:#f8f9fa;"></div>
<div style="left:34.60px;top:519.50px;width:1.00px;height:9.50px;background:#e1e3e6;"></div>
<svg style="left:0;top:515px" width="460" height="16"><rect x="37.6" y="6.1" width="409.2" height="6.3" rx="3.15" fill="#dadce0"/></svg>
<div style="left:956.60px;top:519.70px;width:22.80px;height:8.60px;background:#f1f3f4;"></div>
<div style="left:981.30px;top:519.70px;width:6.90px;height:8.60px;background:#f1f3f4;"></div>
<div style="left:956.20px;top:519.70px;width:0.90px;height:8.60px;background:#dcdfe3;"></div>
<div style="left:968.10px;top:519.70px;width:0.90px;height:8.60px;background:#dcdfe3;"></div>
<div style="left:979.30px;top:519.70px;width:0.90px;height:8.60px;background:#dcdfe3;"></div>
<div style="left:980.80px;top:519.70px;width:0.90px;height:8.60px;background:#dcdfe3;"></div>
<svg style="left:956px;top:519px" width="24" height="10"><path d="M8.0 3.4 L4.8 5.3 L8.0 7.2z" fill="#7c8186"/><path d="M17.4 3.4 L20.4 5.3 L17.4 7.2z" fill="#7c8186"/></svg>
<svg style="left:980px;top:240px" width="10" height="200"><rect x="4.40" y="11.10" width="2.8" height="181.60" fill="#3300ff"/></svg>
<div style="left:0.00px;top:529.00px;width:1024.00px;height:21.00px;background:#f9fbfd;"></div>
<div style="left:0.00px;top:528.60px;width:988.00px;height:0.80px;background:#eceef1;"></div>
<div style="left:233.00px;top:529.00px;width:161.50px;height:21.00px;background:#e1e9f7;"></div>
<svg style="left:40.6px;top:539.6px" width="12" height="9"><path d="M0 0.9 H11.4 M0 4.0 H11.4 M0 7.1 H11.4" stroke="#444746" stroke-width="1.2" fill="none"/></svg>
<div style="top:536.08px;height:16px;line-height:16px;font-size:11.3px;color:#444746;white-space:pre;letter-spacing:0.435px;left:81.60px;">Ваши базовые данные</div>
<svg style="left:217.6px;top:542.6px" width="7" height="4"><path d="M0 0 H6.2 L3.1 3.3z" fill="#444746"/></svg>
<div style="top:536.08px;height:16px;line-height:16px;font-size:11.3px;color:#0b57d0;white-space:pre;font-weight:700;letter-spacing:0.412px;left:242.80px;-webkit-text-stroke:0;">Прогноз окупаемости</div>
<svg style="left:379.4px;top:542.6px" width="7" height="4"><path d="M0 0 H6.2 L3.1 3.3z" fill="#0b57d0"/></svg>
<svg style="left:1007px;top:531px" width="8" height="10"><path d="M1.4 1.4 L5.2 4.8 L1.4 8.2" stroke="#444746" stroke-width="1.3" fill="none"/></svg>
<svg style="left:331.2px;top:9.1px" width="13.8" height="13.4" viewBox="0 0 24 24"><path d="M12 2.6 L14.9 9.1 L22 9.8 L16.6 14.5 L18.2 21.5 L12 17.8 L5.8 21.5 L7.4 14.5 L2 9.8 L9.1 9.1z" fill="none" stroke="#444746" stroke-width="1.9" stroke-linejoin="round"/></svg>
<svg style="left:355px;top:9px" width="17" height="15" viewBox="0 0 17 15"><path d="M11.4 12.1 H4.2 Q2.2 12.1 3.2 10.3 L7.5 3.0 Q8.5 1.4 9.5 3.0 L13.1 9.0" fill="none" stroke="#444746" stroke-width="1.35" stroke-linecap="round" stroke-linejoin="round"/><path d="M6.0 9.3 L8.3 5.5 L10.6 9.3z" fill="none" stroke="#444746" stroke-width="1.15" stroke-linejoin="round"/><path d="M13.3 8.6 V12.4 M11.4 10.5 H15.2" stroke="#444746" stroke-width="1.25" fill="none"/></svg>
<svg style="left:380.8px;top:11.4px" width="15.6" height="10.6" viewBox="0 0 30 20"><path d="M8 18.5 a6 6 0 0 1 -0.6 -12 a8 8 0 0 1 15 1.6 a5.2 5.2 0 0 1 0 10.4z" fill="none" stroke="#444746" stroke-width="2.2" stroke-linejoin="round"/><path d="M10.5 11.5 L13.6 14.4 L19.4 8.4" fill="none" stroke="#444746" stroke-width="2.2"/></svg>
<svg style="left:24.9px;top:59.8px" width="13" height="12" viewBox="0 0 13 12"><circle cx="4.9" cy="4.7" r="3.5" fill="none" stroke="#444746" stroke-width="1.4"/><path d="M7.5 7.3 L11.4 11.0" stroke="#444746" stroke-width="1.5"/></svg>
<svg style="left:51.8px;top:59.6px" width="14" height="12" viewBox="0 0 14 12"><path d="M3.6 3.4 V0.8 H10.2 V3.4" fill="none" stroke="#444746" stroke-width="1.4"/><rect x="0.8" y="3.6" width="12.2" height="5.4" rx="1.6" fill="none" stroke="#444746" stroke-width="1.4"/><rect x="3.6" y="7.2" width="6.6" height="3.9" fill="#edf2fa" stroke="#444746" stroke-width="1.4"/></svg>
<svg style="left:75.3px;top:58.6px" width="14" height="13" viewBox="0 0 14 13"><path d="M0.75 9.6 V1.8 a1 1 0 0 1 1 -1 H10.2" fill="none" stroke="#444746" stroke-width="1.3"/><rect x="3.2" y="3.3" width="9.7" height="8.9" rx="1" fill="none" stroke="#444746" stroke-width="1.4"/><path d="M3.2 6.4 H12.9 M6.4 6.4 V12.2 M9.7 6.4 V12.2 M3.2 9.3 H12.9" stroke="#444746" stroke-width="1.1" fill="none"/></svg>
<svg style="left:93.0px;top:64.3px" width="7" height="4"><path d="M0 0 H6 L3 3.2z" fill="#444746"/></svg>
<svg style="left:149.8px;top:64.8px" width="7" height="4"><path d="M0 0 H6 L3 3.2z" fill="#444746"/></svg>
<svg style="left:182.0px;top:60.0px" width="14" height="10.4" viewBox="0 0 28 20"><path d="M1.6 10 C5 3.6 9.4 1.4 14 1.4 S23 3.6 26.4 10 C23 16.4 18.6 18.6 14 18.6 S5 16.4 1.6 10z" fill="none" stroke="#1a2a57" stroke-width="2.4"/><circle cx="14" cy="10" r="4.9" fill="none" stroke="#1a2a57" stroke-width="2.8"/></svg>
<svg style="left:949.2px;top:62.6px" width="9" height="7"><path d="M0.8 5.6 L4.4 1.6 L8.0 5.6" fill="none" stroke="#444746" stroke-width="1.3"/></svg>
<svg style="left:65.6px;top:97.6px" width="7" height="4"><path d="M0 0 H6 L3 3.2z" fill="#444746"/></svg>
<div style="top:90.90px;height:16px;line-height:16px;font-size:13px;color:#b4b8bd;white-space:pre;font-style:italic;left:90.40px;font-family:'Liberation Serif',serif;">f</div>
<div style="top:92.76px;height:16px;line-height:16px;font-size:10.5px;color:#b4b8bd;white-space:pre;font-style:italic;left:94.80px;font-family:'Liberation Serif',serif;">x</div>
<svg style="left:669px;top:13px" width="20" height="18" viewBox="0 0 20 18"><path d="M3.3 8.9 a7 7 0 1 0 2.2 -5.1" fill="none" stroke="#c4c7c5" stroke-width="1.5"/><path d="M2.2 3.4 V7.6 H6.4z" fill="#c4c7c5"/><path d="M10.2 4.9 V9.4 L13.6 11.6" fill="none" stroke="#c4c7c5" stroke-width="1.5"/></svg>
<svg style="left:710.4px;top:14.8px" width="16" height="15.6" viewBox="0 0 16 15.6"><path d="M1.9 0.95 H13.8 a0.95 0.95 0 0 1 0.95 0.95 V14.0 L12.2 11.6 H1.9 a0.95 0.95 0 0 1 -0.95 -0.95 V1.9 a0.95 0.95 0 0 1 0.95 -0.95z" fill="none" stroke="#444746" stroke-width="1.9" stroke-linejoin="round"/><path d="M3.5 3.9 H12.2 M3.5 6.25 H12.2 M3.5 8.6 H12.2" stroke="#444746" stroke-width="1.45"/></svg>
<svg style="left:753.2px;top:16.3px" width="17" height="13" viewBox="0 0 17 13"><path d="M4.2 1.1 H10.6 a1.6 1.6 0 0 1 1.6 1.6 V9.9 a1.6 1.6 0 0 1 -1.6 1.6 H2.7 a1.6 1.6 0 0 1 -1.6 -1.6 V4.2z" fill="none" stroke="#444746" stroke-width="1.9" stroke-linejoin="round"/><path d="M12.6 6.3 L15.8 2.6 V10z" fill="#444746" stroke="#444746" stroke-width="0.6" stroke-linejoin="round"/></svg>
<svg style="left:777.8px;top:20.6px" width="7" height="4"><path d="M0 0 H6 L3 3.2z" fill="#444746"/></svg>
<div style="left:801.80px;top:6.10px;width:177.40px;height:31.60px;background:#bee6fe;border-radius:15.8px;"></div>
<div style="left:952.20px;top:6.10px;width:1.00px;height:31.60px;background:#f0f6fc;"></div>
<svg style="left:815.1px;top:14.9px" width="14.3" height="14.3" viewBox="0 0 24 24"><path fill="#001d35" fill-rule="evenodd" d="M12 2C6.48 2 2 6.48 2 12s4.48 10 10 10 10-4.48 10-10S17.52 2 12 2zm-1 17.93c-3.95-.49-7-3.85-7-7.93 0-.62.08-1.21.21-1.79L9 15v1c0 1.1.9 2 2 2v1.93zm6.9-2.54c-.26-.81-1-1.39-1.9-1.39h-1v-3c0-.55-.45-1-1-1H8v-2h2c.55 0 1-.45 1-1V7h2c1.1 0 2-.9 2-2v-.41c2.93 1.19 5 4.06 5 7.41 0 2.08-.8 3.97-2.1 5.39z"/></svg>
<div style="top:14.28px;height:16px;line-height:16px;font-size:11.6px;color:#001d35;white-space:pre;font-weight:700;letter-spacing:-0.120px;left:835.80px;-webkit-text-stroke:0;">Настройки Доступа</div>
<svg style="left:962.8px;top:20.8px" width="7" height="4"><path d="M0 0 H6 L3 3.2z" fill="#001d35"/></svg>
<div style="left:991.80px;top:9.20px;width:25.40px;height:25.40px;background:#8d6459;border-radius:50%;"></div>
<div style="top:14.45px;height:16px;line-height:16px;font-size:14px;color:#fff;white-space:pre;left:999.83px;-webkit-text-stroke:0.3px;">A</div>
<svg style="left:1002.8px;top:60px" width="14.8" height="14.8" viewBox="0 0 30 30">
<rect x="0" y="0" width="30" height="30" rx="3" fill="#fff"/>
<path d="M0 3 a3 3 0 0 1 3 -3 H24.2 V5.8 H5.8 V24.2 H0z" fill="#4285f4"/>
<path d="M24.2 0 H27 a3 3 0 0 1 3 3 V5.8 H24.2z" fill="#1967d2"/>
<path d="M24.2 5.8 H30 V24.2 H24.2z" fill="#fbbc04"/>
<path d="M5.8 24.2 H24.2 V30 H3 a3 3 0 0 1 -3 -3 V24.2z" fill="#34a853"/>
<path d="M0 24.2 H5.8 V30 H3 a3 3 0 0 1 -3 -3z" fill="#188038"/>
<path d="M24.2 24.2 H30 L24.2 30z" fill="#ea4335"/>
<text x="15" y="20.4" font-size="14.6" font-weight="400" font-family="Liberation Sans" text-anchor="middle" fill="#4a7fe8" stroke="#4a7fe8" stroke-width="0.5" textLength="14.5">31</text>
</svg>
<svg style="left:1002.6px;top:103.6px" width="15.4" height="14.8" viewBox="0 0 31 30">
<rect x="0" y="0" width="31" height="30" rx="3.4" fill="#fbbc04"/>
<path d="M15.5 6.4 a6 6 0 0 1 3.4 11 V19.4 H12.1 V17.4 a6 6 0 0 1 3.4 -11z M12.6 21.2 H18.4 V23.6 H12.6z" fill="#fff"/>
</svg>
<svg style="left:1003.4px;top:149.2px" width="14.4" height="13.6" viewBox="0 0 29 27">
<circle cx="13.2" cy="14.4" r="10.2" fill="none" stroke="#1b6ef3" stroke-width="4.7"/>
<path d="M8.6 14 L12.4 17.8 L24 5" fill="none" stroke="#1b6ef3" stroke-width="3.6" stroke-linecap="round" stroke-linejoin="round"/>
<circle cx="24.6" cy="4.6" r="2.6" fill="#1b6ef3"/>
</svg>
<svg style="left:1005px;top:193.2px" width="11.2" height="13" viewBox="0 0 22 26">
<circle cx="11" cy="5.4" r="4.7" fill="#0f45d8"/>
<path d="M1 25 V20.6 C1 15.6 5.4 13.6 11 13.6 S21 15.6 21 20.6 V25z" fill="#1a4fe0"/>
<path d="M1 21.4 H21 V25 H1z" fill="#3c6ef0" opacity="0.8"/>
</svg>
<svg style="left:1005.5px;top:237.3px" width="9.9" height="13.9" viewBox="0 0 20 28">
<defs><clipPath id="pin"><path d="M10 0.6 C4.6 0.6 0.8 4.6 0.8 9.6 C0.8 16 7.6 20.5 10 27.4 C12.4 20.5 19.2 16 19.2 9.6 C19.2 4.6 15.4 0.6 10 0.6z"/></clipPath></defs>
<g clip-path="url(#pin)">
<rect x="0" y="0" width="20" height="28" fill="#1ea54a"/>
<path d="M10 9.8 L-1 14.4 L3 23 L6.4 21.6 L13 11.4z" fill="#fbbc04"/>
<path d="M10 9.8 L2.4 2.8 L-3 6 L-1 14.4z" fill="#ea3a2c"/>
<path d="M10 9.8 L2.4 2.8 L10 -3 L21 -1 L19.4 6.4z" fill="#2a6ff0"/>
</g>
<circle cx="10.1" cy="9.8" r="3.1" fill="#fff"/>
</svg>
<div style="left:1002.00px;top:278.40px;width:16.40px;height:1.00px;background:#e0e3e7;"></div>
<svg style="left:1005px;top:309.2px" width="11" height="11.4"><path d="M5.4 0.2 V11 M0.2 5.6 H10.8" stroke="#1f1f1f" stroke-width="1.45" fill="none"/></svg>
</div></body></html>
